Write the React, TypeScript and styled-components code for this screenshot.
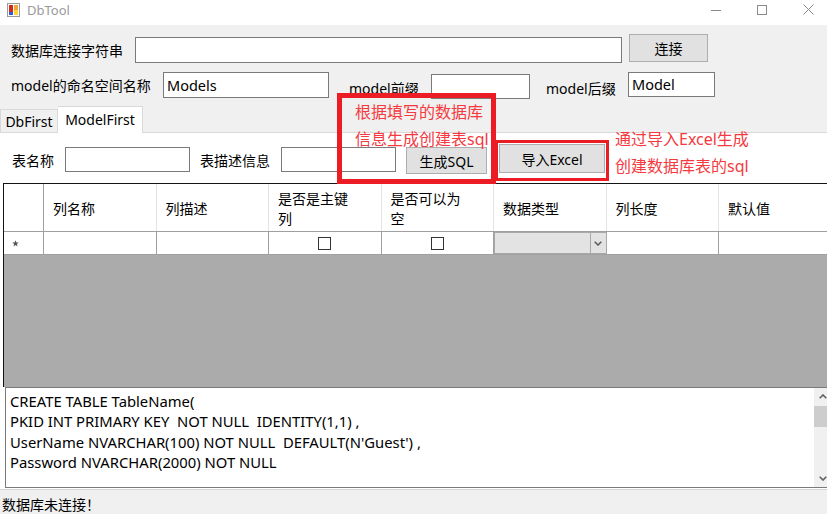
import React from 'react';
import styled, { createGlobalStyle } from 'styled-components';

const Global = createGlobalStyle`
  html, body { margin: 0; padding: 0; background: #f0f0f0; }
  body { font-family: "Noto Sans", "Noto Sans CJK SC", sans-serif; font-size: 14px; color: #000; }
  * { box-sizing: border-box; }
`;

const Window = styled.div`
  position: relative;
  width: 827px;
  height: 514px;
  overflow: hidden;
  background: #f0f0f0;
  display: flex;
  flex-direction: column;
`;

const TitleBar = styled.div`
  height: 25px;
  flex: none;
  background: #fff;
  display: flex;
  align-items: center;
  padding-bottom: 6px;
`;

const AppIcon = styled.svg`
  margin-left: 7px;
  flex: none;
`;

const Title = styled.span`
  margin-left: 7px;
  font-family: "Noto Sans", sans-serif;
  font-size: 13px;
  color: #9a9a9a;
`;

const Controls = styled.div`
  margin-left: auto;
  margin-right: -4px;
  display: flex;
  height: 19px;
`;

const ControlBtn = styled.div`
  width: 46px;
  height: 100%;
  display: flex;
  align-items: center;
  justify-content: center;
`;

const FormRow = styled.div<{ $mt: number; $h: number; $pl?: number }>`
  display: flex;
  align-items: flex-start;
  margin-top: ${(p) => p.$mt}px;
  height: ${(p) => p.$h}px;
  padding-left: ${(p) => p.$pl ?? 11}px;
  flex: none;
`;

const Label = styled.span<{ $w: number; $mt: number; $ml?: number }>`
  width: ${(p) => p.$w}px;
  margin-top: ${(p) => p.$mt}px;
  margin-left: ${(p) => p.$ml ?? 0}px;
  flex: none;
  white-space: nowrap;
  font-size: 14px;
  line-height: 20px;
`;

const Input = styled.div<{ $w: number; $h: number; $mt: number }>`
  width: ${(p) => p.$w}px;
  height: ${(p) => p.$h}px;
  margin-top: ${(p) => p.$mt}px;
  flex: none;
  background: #fff;
  border: 1px solid #7a7a7a;
  font-size: 14.5px;
  line-height: ${(p) => p.$h - 2}px;
  padding-left: 3px;
  white-space: nowrap;
`;

const Button = styled.div<{ $w: number; $h: number; $mt: number; $ml: number }>`
  width: ${(p) => p.$w}px;
  height: ${(p) => p.$h}px;
  margin-top: ${(p) => p.$mt}px;
  margin-left: ${(p) => p.$ml}px;
  flex: none;
  background: #e1e1e1;
  border: 1px solid #adadad;
  display: flex;
  align-items: center;
  justify-content: center;
  font-size: 14px;
`;

const TabStrip = styled.div`
  margin-top: 7px;
  height: 27px;
  flex: none;
  display: flex;
  align-items: flex-end;
`;

const Tab = styled.div<{ $active?: boolean; $w: number }>`
  width: ${(p) => p.$w}px;
  height: ${(p) => (p.$active ? 27 : 24)}px;
  background: ${(p) => (p.$active ? '#fff' : '#f0f0f0')};
  border: 1px solid #d9d9d9;
  border-bottom: ${(p) => (p.$active ? 'none' : '1px solid #d9d9d9')};
  border-left: ${(p) => (p.$active ? 'none' : '1px solid #d9d9d9')};
  display: flex;
  align-items: center;
  justify-content: center;
  padding-bottom: ${(p) => (p.$active ? 2 : 0)}px;
  font-size: 14px;
`;

const TabFill = styled.div`
  flex: 1;
  height: 1px;
  background: #d9d9d9;
`;

const Panel = styled.div`
  flex: 1;
  background: #fff;
  display: flex;
  flex-direction: column;
  border-bottom: 1px solid #d4d4d4;
  padding-bottom: 1px;
`;

const Grid = styled.div`
  margin-top: 9px;
  margin-left: 3px;
  width: 840px;
  height: 204px;
  flex: none;
  border-top: 1px solid #141414;
  border-left: 1px solid #141414;
  display: flex;
  flex-direction: column;
`;

const GridRow = styled.div<{ $h: number }>`
  display: grid;
  grid-template-columns: 40px repeat(7, 112.5px);
  height: ${(p) => p.$h}px;
  flex: none;
  border-bottom: 1px solid #a0a0a0;
  background: #fff;
`;

const HeadCell = styled.div<{ $corner?: boolean }>`
  border-right: 1px solid ${(p) => (p.$corner ? '#a0a0a0' : '#e3e3e3')};
  display: flex;
  align-items: center;
  padding: 3px 0 0 9px;
`;

const HeadText = styled.span`
  max-width: 76px;
  font-size: 14px;
  line-height: 20px;
`;

const Cell = styled.div`
  border-right: 1px solid #a0a0a0;
  display: flex;
  align-items: center;
  justify-content: center;
`;

const RowHeadCell = styled(Cell)`
  justify-content: flex-start;
  padding-left: 8px;
`;

const CheckBox = styled.div`
  width: 13px;
  height: 13px;
  border: 1px solid #333;
  background: #fff;
`;

const Combo = styled.div`
  align-self: stretch;
  flex: 1;
  margin-right: -1px;
  background: #e3e3e3;
  border: 1px solid #a8a8a8;
  display: flex;
  justify-content: flex-end;
`;

const ComboArrow = styled.div`
  width: 16px;
  border-left: 1px solid #a8a8a8;
  display: flex;
  align-items: center;
  justify-content: center;
`;

const GridBody = styled.div`
  flex: 1;
  background: #ababab;
`;

const SqlBox = styled.div`
  margin-left: 5px;
  width: 827px;
  height: 101px;
  flex: none;
  border: 1px solid #7a7a7a;
  background: #fff;
  display: flex;
`;

const SqlText = styled.div`
  flex: 1;
  padding: 3px 0 0 4px;
  font-size: 14.8px;
  line-height: 20.3px;
  white-space: pre;
`;

const ScrollBar = styled.div`
  width: 17px;
  flex: none;
  background: #f0f0f0;
  display: flex;
  flex-direction: column;
`;

const ScrollArrow = styled.div`
  height: 17px;
  display: flex;
  align-items: center;
  justify-content: center;
`;

const ScrollThumb = styled.div`
  height: 21px;
  margin-top: 1px;
  background: #cdcdcd;
`;

const ScrollTrack = styled.div`
  flex: 1;
`;

const StatusBar = styled.div`
  height: 24px;
  flex: none;
  padding: 5px 0 0 2px;
  font-size: 14px;
  line-height: 20px;
`;

const RedBox = styled.div<{ $x: number; $y: number; $w: number; $h: number; $b: number }>`
  position: absolute;
  left: ${(p) => p.$x}px;
  top: ${(p) => p.$y}px;
  width: ${(p) => p.$w}px;
  height: ${(p) => p.$h}px;
  border: ${(p) => p.$b}px solid #ec1c24;
`;

const Note = styled.div<{ $x: number; $y: number }>`
  position: absolute;
  left: ${(p) => p.$x}px;
  top: ${(p) => p.$y}px;
  color: #f43a3f;
  font-size: 16px;
  line-height: 27px;
  white-space: nowrap;
`;

const headers = ['列名称', '列描述', '是否是主键列', '是否可以为空', '数据类型', '列长度', '默认值'];

const Chevron = ({ up }: { up?: boolean }) => (
  <svg width="8" height="5" viewBox="0 0 8 5">
    <path d={up ? 'M0.7 4.3 L4 1 L7.3 4.3' : 'M0.7 0.7 L4 4 L7.3 0.7'} fill="none" stroke="#606060" strokeWidth="1.6" />
  </svg>
);

export default function App() {
  return (
    <Window>
      <Global />
      <TitleBar>
        <AppIcon width="13" height="14" viewBox="0 0 13 14">
          <rect x="0.5" y="0.5" width="12" height="13" fill="#fff" stroke="#9a9a9a" />
          <rect x="2" y="2" width="4" height="5" fill="#d42a1c" />
          <rect x="7" y="2" width="4" height="5" fill="#f0a43a" />
          <rect x="2" y="7" width="4" height="2" fill="#d42a1c" />
          <rect x="2" y="9" width="4" height="3" fill="#2f5fd0" />
          <rect x="7" y="7" width="4" height="5" fill="#ffd23a" />
        </AppIcon>
        <Title>DbTool</Title>
        <Controls>
          <ControlBtn>
            <svg width="10" height="10" viewBox="0 0 10 10">
              <path d="M0 5.5 H10" stroke="#8a8a8a" strokeWidth="1" />
            </svg>
          </ControlBtn>
          <ControlBtn>
            <svg width="10" height="10" viewBox="0 0 10 10">
              <rect x="0.5" y="0.5" width="9" height="9" fill="none" stroke="#8a8a8a" strokeWidth="1" />
            </svg>
          </ControlBtn>
          <ControlBtn>
            <svg width="11" height="11" viewBox="0 0 11 11">
              <path d="M0.5 0.5 L10.5 10.5 M10.5 0.5 L0.5 10.5" stroke="#8a8a8a" strokeWidth="1" />
            </svg>
          </ControlBtn>
        </Controls>
      </TitleBar>

      <FormRow $mt={9} $h={28}>
        <Label $w={124} $mt={7}>数据库连接字符串</Label>
        <Input $w={487} $h={26} $mt={3} />
        <Button $w={79} $h={28} $mt={0} $ml={7}>连接</Button>
      </FormRow>

      <FormRow $mt={10} $h={27}>
        <Label $w={152} $mt={4}>model的命名空间名称</Label>
        <Input $w={166} $h={26} $mt={0}>Models</Input>
        <Label $w={82} $mt={7} $ml={20}>model前缀</Label>
        <Input $w={99} $h={25} $mt={2} />
        <Label $w={82} $mt={7} $ml={16}>model后缀</Label>
        <Input $w={87} $h={25} $mt={0}>Model</Input>
      </FormRow>

      <TabStrip>
        <Tab $w={58}>DbFirst</Tab>
        <Tab $w={85} $active>ModelFirst</Tab>
        <TabFill />
      </TabStrip>

      <Panel>
        <FormRow $mt={11} $h={30} $pl={12}>
          <Label $w={53} $mt={7}>表名称</Label>
          <Input $w={125} $h={25} $mt={3} />
          <Label $w={81} $mt={7} $ml={10}>表描述信息</Label>
          <Input $w={115} $h={25} $mt={3} />
          <Button $w={81} $h={27} $mt={3} $ml={10}>生成SQL</Button>
          <Button $w={106} $h={29} $mt={0} $ml={12}>导入Excel</Button>
        </FormRow>

        <Grid>
          <GridRow $h={48}>
            <HeadCell $corner />
            {headers.map((h) => (
              <HeadCell key={h}>
                <HeadText>{h}</HeadText>
              </HeadCell>
            ))}
          </GridRow>
          <GridRow $h={23}>
            <RowHeadCell>
              <svg width="7" height="7" viewBox="0 0 7 7">
                <path d="M3.5 0.3 L4.4 2.4 L6.7 2.5 L4.9 4 L5.5 6.5 L3.5 5.1 L1.5 6.5 L2.1 4 L0.3 2.5 L2.6 2.4 Z" fill="#555" />
              </svg>
            </RowHeadCell>
            <Cell />
            <Cell />
            <Cell><CheckBox /></Cell>
            <Cell><CheckBox /></Cell>
            <Cell>
              <Combo>
                <ComboArrow><Chevron /></ComboArrow>
              </Combo>
            </Cell>
            <Cell />
            <Cell />
          </GridRow>
          <GridBody />
        </Grid>

        <SqlBox>
          <SqlText>
            {"CREATE TABLE TableName(\nPKID INT PRIMARY KEY  NOT NULL  IDENTITY(1,1) ,\nUserName NVARCHAR(100) NOT NULL  DEFAULT(N'Guest') ,\nPassword NVARCHAR(2000) NOT NULL"}
          </SqlText>
          <ScrollBar>
            <ScrollArrow><Chevron up /></ScrollArrow>
            <ScrollThumb />
            <ScrollTrack />
            <ScrollArrow><Chevron /></ScrollArrow>
          </ScrollBar>
        </SqlBox>
      </Panel>

      <StatusBar>数据库未连接！</StatusBar>

      <RedBox $x={337} $y={93} $w={159} $h={91} $b={5} />
      <Note $x={355} $y={99}>根据填写的数据库<br />信息生成创建表sql</Note>
      <RedBox $x={495} $y={140} $w={114} $h={41} $b={3} />
      <Note $x={615} $y={126}>通过导入Excel生成<br />创建数据库表的sql</Note>
    </Window>
  );
}
